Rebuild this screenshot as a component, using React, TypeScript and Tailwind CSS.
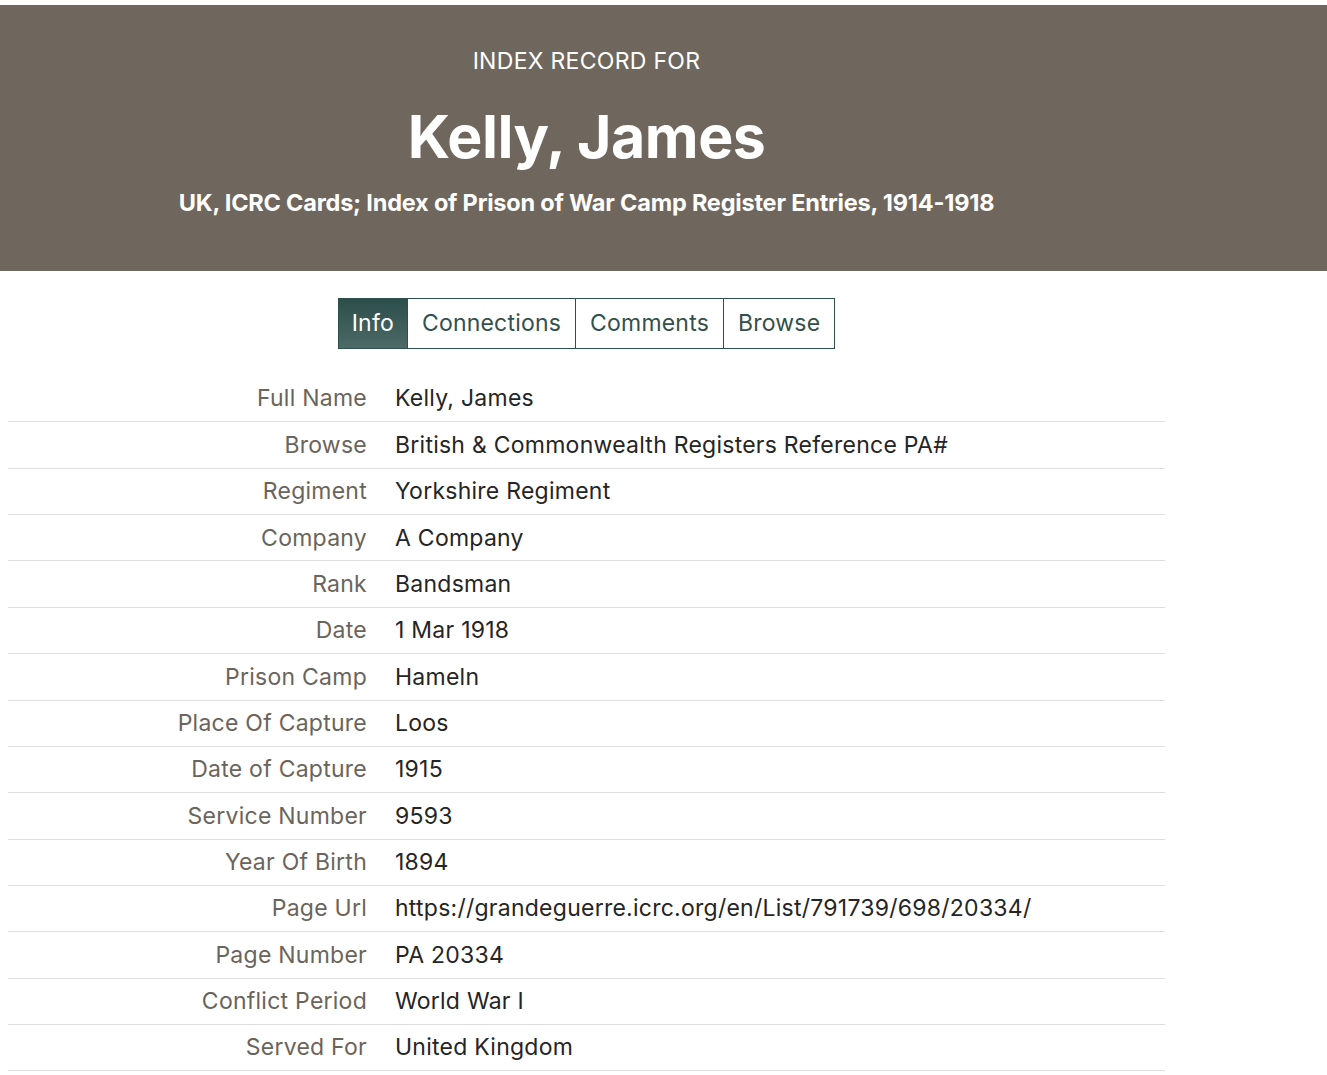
import React from 'react';

const rows: [string, string][] = [
  ['Full Name', 'Kelly, James'],
  ['Browse', 'British & Commonwealth Registers Reference PA#'],
  ['Regiment', 'Yorkshire Regiment'],
  ['Company', 'A Company'],
  ['Rank', 'Bandsman'],
  ['Date', '1 Mar 1918'],
  ['Prison Camp', 'Hameln'],
  ['Place Of Capture', 'Loos'],
  ['Date of Capture', '1915'],
  ['Service Number', '9593'],
  ['Year Of Birth', '1894'],
  ['Page Url', 'https://grandeguerre.icrc.org/en/List/791739/698/20334/'],
  ['Page Number', 'PA 20334'],
  ['Conflict Period', 'World War I'],
  ['Served For', 'United Kingdom'],
];

const tabs = ['Info', 'Connections', 'Comments', 'Browse'];

export default function App() {
  return (
    <div className="min-h-screen bg-white pt-[5px] font-['Inter','Liberation_Sans',sans-serif]">
      {/* header */}
      <div className="h-[266px] bg-[#6f675e] text-white">
        <div className="w-[1157px] ml-[8px] flex flex-col items-center">
          <div className="mt-[42px] text-[23px] leading-[28px] tracking-[0.3px]">INDEX RECORD FOR</div>
          <h1 className="mt-[26px] text-[59px] leading-[72px] font-bold tracking-[-0.5px]">Kelly, James</h1>
          <div className="mt-[15px] text-[23.5px] leading-[30px] font-bold tracking-[-0.2px]">
            UK, ICRC Cards; Index of Prison of War Camp Register Entries, 1914-1918
          </div>
        </div>
      </div>

      <div className="w-[1157px] ml-[8px]">
        {/* tabs */}
        <div className="flex justify-center mt-[27px]">
          <div className="flex h-[51px] border border-[#2f4f4c]">
            {tabs.map((t, i) => (
              <div
                key={t}
                className={
                  i === 0
                    ? 'flex items-center px-[13px] text-[23px] tracking-[0.2px] text-white bg-gradient-to-b from-[#2c4e4b] to-[#4c6a67]'
                    : 'flex items-center px-[14px] text-[23px] tracking-[0.2px] text-[#33504d] border-l border-[#2f4f4c]'
                }
              >
                {t}
              </div>
            ))}
          </div>
        </div>

        {/* details */}
        <div className="mt-[27px]">
          {rows.map(([label, value]) => (
            <div key={label} className="flex items-center h-[46.36px] border-b border-[#dddddd] text-[23px] tracking-[0.25px]">
              <div className="w-[359px] shrink-0 text-right text-[#6b645b]">{label}</div>
              <div className="pl-[28px] text-[#252525]">{value}</div>
            </div>
          ))}
        </div>
      </div>
    </div>
  );
}
